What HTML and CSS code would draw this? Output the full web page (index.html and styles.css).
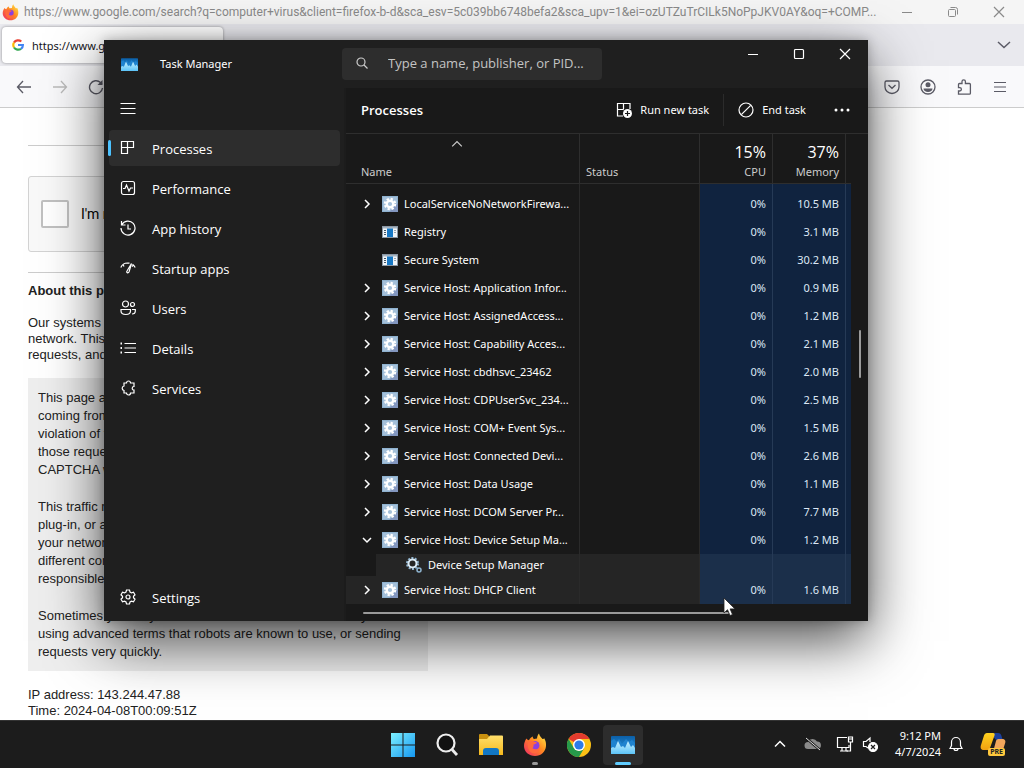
FILE: index.html
```html
<!DOCTYPE html>
<html lang="en">
<head>
	<meta charset="UTF-8">
	<title>Task Manager</title>
	<link rel="stylesheet" href="styles.css">
</head>
<body>
<!-- shared icons -->
<svg class="defs" width="0" height="0">
	<defs>
		<linearGradient id="tmSky" x1="0" y1="0" x2="0" y2="1"><stop offset="0" stop-color="#0b5fa8"/><stop offset="1" stop-color="#2ea0e6"/></linearGradient>
		<linearGradient id="tmWave" x1="0" y1="0" x2="0" y2="1"><stop offset="0" stop-color="#c9f1ff"/><stop offset="1" stop-color="#5cc3f7"/></linearGradient>
		<linearGradient id="win" x1="0" y1="0" x2="1" y2="1"><stop offset="0" stop-color="#7df0ff"/><stop offset="1" stop-color="#1597f0"/></linearGradient>
		<linearGradient id="fox" x1="1" y1="0" x2="0" y2="1"><stop offset="0" stop-color="#fff14a"/><stop offset=".45" stop-color="#ff8a1f"/><stop offset="1" stop-color="#f0246a"/></linearGradient>
		<linearGradient id="folder" x1="0" y1="0" x2="0" y2="1"><stop offset="0" stop-color="#ffdf6b"/><stop offset="1" stop-color="#f6b91c"/></linearGradient>
		<linearGradient id="cop" x1="0" y1="0" x2="0" y2="1"><stop offset="0" stop-color="#ffd21f"/><stop offset="1" stop-color="#f0a010"/></linearGradient>
	</defs>
	<symbol id="i-tm" viewBox="0 0 24 18">
		<rect width="24" height="18" rx="1" fill="url(#tmSky)"/>
		<path d="M0 5l3-2 3 3 2-3 3 5 4-5 3 3 3-2 3 3v10H0z" fill="#1f83cf"/>
		<path d="M0 12l2-1 2 1 3-7 3 6 2-1 2 2 3-7 3 6 2-2 2 3v6H0z" fill="url(#tmWave)"/>
	</symbol>
	<symbol id="i-fox" viewBox="0 0 24 24">
		<path d="M3.500 5.500c.6 1 1.400 1.600 2.500 1.800C7 5 8.500 4 10 3.500c-.4 1.200 0 2 1 2.600l3-.6c.2-2 .8-3.600 2-5 .5 2.500 2 3.600 3.500 5.500 1 .2 1.500-.2 1.700-.8 1.600 2.600 2 5 1.800 7.800-.5 6-5 10-11 10S1 18.700 1 13c0-3 1-5.500 2.500-7.500z" fill="url(#fox)"/>
		<circle cx="12" cy="12.500" r="4.500" fill="#8b3fe0"/>
		<path d="M5 9c2-1.500 4.500-1.500 6.500-.2l2.500.7c-.6 1.200-1.800 1.700-3.500 2 .2 1.500 0 2.700-1 3.800 2.500 2 6 1 7-1.500 1 4-2 6.700-5.500 6.500C6.500 20 4 15 5 9z" fill="#ff6a3c"/>
	</symbol>
	<symbol id="i-svc" viewBox="0 0 16 16">
		<rect width="16" height="16" fill="#8fb2cf"/>
		<rect x="1" y="1" width="14" height="14" fill="#a3bfd9"/>
		<path d="M16 7v9H7z" fill="#8296bf"/>
		<circle cx="8" cy="8" r="5.200" fill="none" stroke="#fff" stroke-width="2" stroke-dasharray="2.300 1.784"/>
		<circle cx="8" cy="8" r="3.300" fill="none" stroke="#fff" stroke-width="2.400"/>
	</symbol>
	<symbol id="i-app" viewBox="0 0 16 12">
		<rect x=".5" y=".5" width="15" height="11" fill="#f2f6fa" stroke="#8a97a5"/>
		<path d="M1 1h14v1.500H1z" fill="#a7b3bf"/>
		<rect x="5" y="2.500" width="6" height="8.500" fill="#1878c4"/>
		<path d="M2 4.500h2M2 6.500h2M2 8.500h2M12.500 4.500h1M12.500 6.500h1" stroke="#456"/>
	</symbol>
	<symbol id="i-right" viewBox="0 0 10 10"><path d="M3 1l4 4-4 4" fill="none" stroke="currentColor" stroke-width="1.500"/></symbol>
	<symbol id="i-down" viewBox="0 0 10 10"><path d="M1 3l4 4 4-4" fill="none" stroke="currentColor" stroke-width="1.500"/></symbol>
	<symbol id="i-up" viewBox="0 0 10 10"><path d="M1 7l4-4 4 4" fill="none" stroke="currentColor"/></symbol>
	<symbol id="i-min" viewBox="0 0 12 12"><path d="M1 6.500h10" stroke="currentColor"/></symbol>
	<symbol id="i-x" viewBox="0 0 12 12"><path d="M1 1l10 10M11 1L1 11" stroke="currentColor" stroke-width="1.200"/></symbol>
</svg>

<main class="browser">
	<header class="titlebar">
		<svg class="fox" width="17" height="17"><use href="#i-fox"/></svg>
		<span class="title">https://www.google.com/search?q=computer+virus&amp;client=firefox-b-d&amp;sca_esv=5c039bb6748befa2&amp;sca_upv=1&amp;ei=ozUTZuTrCILk5NoPpJKV0AY&amp;oq=+COMP...</span>
		<div class="caption">
			<button aria-label="Minimize"><svg width="12" height="12"><use href="#i-min"/></svg></button>
			<button aria-label="Restore"><svg width="12" height="12" fill="none" stroke="currentColor"><rect x="1.500" y="3.500" width="7" height="7" rx="1"/><path d="M3.500 1.500h5a2 2 0 0 1 2 2v5"/></svg></button>
			<button aria-label="Close"><svg width="12" height="12"><use href="#i-x"/></svg></button>
		</div>
	</header>
	<div class="tabs">
		<div class="tab">
			<svg width="12" height="12" viewBox="0 0 12 12" fill="none" stroke-width="2.200"><path d="M2 3.500A5 5 0 0 1 9.300 2.500" stroke="#ea4335"/><path d="M2 8.500a5 5 0 0 1 0-5" stroke="#fbbc05"/><path d="M2 8.500a5 5 0 0 0 7 1.300" stroke="#34a853"/><path d="M6 6h4.900c0 1.800-.7 3-1.900 3.800" stroke="#4285f4"/></svg>
			<span>https://www.google.com/search?q</span>
		</div>
		<button aria-label="List all tabs"><svg width="14" height="8" viewBox="0 0 14 8" fill="none" stroke="currentColor" stroke-width="1.500"><path d="M1 1l6 5.500L13 1"/></svg></button>
	</div>
	<nav class="toolbar">
		<button aria-label="Back"><svg width="16" height="16" viewBox="0 0 16 16" fill="none" stroke="currentColor" stroke-width="1.300"><path d="M15 8H1.500M7 2L1.500 8 7 14"/></svg></button>
		<button class="off" aria-label="Forward"><svg width="16" height="16" viewBox="0 0 16 16" fill="none" stroke="currentColor" stroke-width="1.300"><path d="M1 8h13.500M9 2l5.500 6L9 14"/></svg></button>
		<button aria-label="Reload"><svg width="16" height="16" viewBox="0 0 16 16" fill="none" stroke="currentColor" stroke-width="1.400"><path d="M14.500 9A6.500 6.500 0 1 1 12.500 3.500L14 5"/><path d="M14.500 1v5h-5z" fill="currentColor" stroke="none"/></svg></button>
		<div class="tools">
			<button aria-label="Save to Pocket"><svg width="16" height="16" viewBox="0 0 16 16" fill="none" stroke="currentColor" stroke-width="1.300"><path d="M2.500 2h11A1.500 1.500 0 0 1 15 3.500V8A7 6.500 0 0 1 1 8V3.500A1.500 1.500 0 0 1 2.500 2z"/><path d="M4.500 6L8 9.300 11.500 6"/></svg></button>
			<button aria-label="Account"><svg width="16" height="16" viewBox="0 0 16 16"><circle cx="8" cy="8" r="7" fill="none" stroke="currentColor" stroke-width="1.300"/><circle cx="8" cy="5.800" r="2.500" fill="currentColor"/><path d="M3.500 9.500h9c0 2-2 3.500-4.500 3.500S3.500 11.500 3.500 9.500z" fill="currentColor"/></svg></button>
			<button aria-label="Extensions"><svg width="16" height="16" viewBox="0 0 16 16" fill="none" stroke="currentColor" stroke-width="1.300"><path d="M2.500 15.200V12h1.200a1.700 1.700 0 0 0 0-3.400H2.500V5.500a1 1 0 0 1 1-1H6V2.600a1.700 1.700 0 0 1 3.400 0v1.900h4a1 1 0 0 1 1 1v8.700a1 1 0 0 1-1 1z"/></svg></button>
			<button aria-label="Menu"><svg width="14" height="12" viewBox="0 0 14 12" stroke="currentColor" stroke-width="1.200"><path d="M1 1.500h12M1 6h12M1 10.500h12"/></svg></button>
		</div>
	</nav>
	<article class="page">
		<hr>
		<div class="captcha">
			<input type="checkbox" id="robot">
			<label for="robot">I'm not a robot</label>
		</div>
		<hr>
		<h1>About this page</h1>
		<p>Our systems have detected unusual traffic from your computer<br>network. This page checks to see if it's really you sending the<br>requests, and not a robot. <a href="#why">Why did this happen?</a></p>
		<div class="why" id="why">
			<p>This page appears when Google automatically detects requests<br>coming from your computer network which appear to be in<br>violation of the <a href="#terms">Terms of Service</a>. The block will expire shortly after<br>those requests stop. In the meantime, solving the above<br>CAPTCHA will let you continue to use our services.</p>
			<p>This traffic may have been sent by malicious software, a browser<br>plug-in, or a script that sends automated requests. If you share<br>your network connection, ask your administrator for help — a<br>different computer using the same IP address may be<br>responsible. <a href="#more">Learn more</a></p>
			<p>Sometimes you may be asked to solve the CAPTCHA if you are<br>using advanced terms that robots are known to use, or sending<br>requests very quickly.</p>
		</div>
		<p class="ip">IP address: 143.244.47.88<br>Time: 2024-04-08T00:09:51Z</p>
	</article>
</main>

<section class="taskmgr" aria-label="Task Manager">
	<header class="tm-title">
		<svg width="17" height="13"><use href="#i-tm"/></svg>
		<span class="name">Task Manager</span>
		<label class="search">
			<svg width="12" height="12" viewBox="0 0 12 12" fill="none" stroke="currentColor" stroke-width="1.200"><circle cx="5" cy="5" r="4"/><path d="M8 8l3.500 3.500"/></svg>
			<input type="text" aria-label="Search" placeholder="Type a name, publisher, or PID...">
		</label>
		<div class="caption">
			<button aria-label="Minimize"><svg width="12" height="12"><use href="#i-min"/></svg></button>
			<button aria-label="Maximize"><svg width="12" height="12" fill="none" stroke="currentColor" stroke-width="1.200"><rect x="1.500" y="1.500" width="9" height="9" rx="1"/></svg></button>
			<button aria-label="Close"><svg width="12" height="12"><use href="#i-x"/></svg></button>
		</div>
	</header>
	<div class="tm-body">
		<nav class="side">
			<button class="burger" aria-label="Menu"><svg width="16" height="12" viewBox="0 0 16 12" stroke="currentColor"><path d="M.5 1.500h15M.5 6.500h15M.5 11.500h15"/></svg></button>
			<button class="item actived"><svg viewBox="0 0 16 16"><path d="M1.500 1.500h12v6h-6v6h-6zM7.500 1.500v6h-6"/></svg>Processes</button>
			<button class="item"><svg viewBox="0 0 16 16"><rect x="1.500" y="1.500" width="13" height="13" rx="2"/><path d="M3 8.500h2L6.500 5l2.500 6 1.500-3H13"/></svg>Performance</button>
			<button class="item"><svg viewBox="0 0 16 16"><path d="M1.500 1v4h4M1.800 4.800A7 7 0 1 1 1 8M8 4.500V9h3"/></svg>App history</button>
			<button class="item"><svg viewBox="0 0 16 16"><path d="M.8 7.500A7.500 7.500 0 0 1 7.500 3l2 .2M12.500 4.200c1.200.8 2 1.900 2.700 3.300M3 4.500l1 2M13.500 5l-1.500 1.500M7 11l4.500-7.500L9 12c-1 1.500-3 .5-2-1z"/></svg>Startup apps</button>
			<button class="item"><svg viewBox="0 0 16 16"><circle cx="5.500" cy="4" r="3"/><circle cx="12.500" cy="4.500" r="2"/><path d="M1 9.500h9.500v1.500c0 2.500-2 3.500-4.700 3.500S1 13.500 1 11zM12 9.500h3.300V11c0 2-1.500 3-3.300 3"/></svg>Users</button>
			<button class="item"><svg viewBox="0 0 16 16"><path d="M4.500 3.500H16M4.500 8H16M4.500 12.500H16"/><path d="M.5 3.500H2M.5 8H2M.5 12.500H2" stroke-width="2"/></svg>Details</button>
			<button class="item"><svg viewBox="0 0 16 16"><path d="M4 3h2.500a2 2 0 0 1 4 0H14v3.500a1.800 1.800 0 0 0 0 3.600V13h-3.500a2 2 0 0 1-4 0H4v-2.500a2.300 2.300 0 0 1 0-4.500z"/></svg>Services</button>
			<button class="item bottom"><svg viewBox="0 0 16 16"><path d="M6.500 1h3l.5 2 1.500.9 2-.7L15 5.800 13.500 7.200v1.600L15 10.200l-1.500 2.600-2-.7L10 13l-.5 2h-3L6 13l-1.500-.9-2 .7L1 10.200l1.500-1.400V7.200L1 5.800l1.500-2.600 2 .7L6 3z"/><circle cx="8" cy="8" r="2"/></svg>Settings</button>
		</nav>
		<div class="content">
			<div class="bar">
				<h2>Processes</h2>
				<button><svg width="16" height="16" viewBox="0 0 16 16"><path d="M7 14H1.500V1.500H14V7M7.500 1.500v6M1.500 7.500h6" fill="none" stroke="currentColor" stroke-width="1.200"/><circle cx="11.500" cy="11.500" r="4.500" fill="#fff"/><path d="M11.500 9v5M9 11.500h5" stroke="#191919" stroke-width="1.200"/></svg>Run new task</button>
				<button class="end"><svg width="16" height="16" viewBox="0 0 16 16" fill="none" stroke="currentColor" stroke-width="1.200"><circle cx="8" cy="8" r="7"/><path d="M3.300 12.700l9.400-9.400"/></svg>End task</button>
				<button class="more" aria-label="More"><svg width="16" height="4" viewBox="0 0 16 4" fill="currentColor"><circle cx="2" cy="2" r="1.500"/><circle cx="8" cy="2" r="1.500"/><circle cx="14" cy="2" r="1.500"/></svg></button>
			</div>
			<div class="grid">
				<table>
					<colgroup><col><col class="c-status"><col class="c-num"><col class="c-num"><col class="c-tail"></colgroup>
					<thead>
						<tr>
							<th><svg class="sort" width="12" height="12"><use href="#i-up"/></svg>Name</th>
							<th>Status</th>
							<th class="num"><b>15%</b>CPU</th>
							<th class="num"><b>37%</b>Memory</th>
							<th></th>
						</tr>
					</thead>
					<tbody id="rows"></tbody>
				</table>
				<div class="hscroll"></div>
				<div class="vscroll"></div>
			</div>
		</div>
	</div>
</section>

<footer class="taskbar">
	<div class="apps">
		<button aria-label="Start"><svg width="24" height="24" viewBox="0 0 24 24" fill="url(#win)"><path d="M0 0h11.500v11.500H0zM12.500 0H24v11.500H12.500zM0 12.500h11.500V24H0zM12.500 12.500H24V24H12.500z"/></svg></button>
		<button aria-label="Search"><svg width="24" height="24" viewBox="0 0 24 24" fill="none" stroke="#eee" stroke-width="2.200"><circle cx="11" cy="10" r="8.500" fill="#111"/><path d="M17 16.500l5 5.500" stroke-width="2.800"/></svg></button>
		<button aria-label="File Explorer"><svg width="26" height="24" viewBox="0 0 26 24"><path d="M1 2a1 1 0 0 1 1-1h7l2 2v3H1z" fill="#c8900f"/><path d="M1 6h8l3-3.500h12a1 1 0 0 1 1 1V22H1z" fill="url(#folder)"/><path d="M5 22v-4a3 3 0 0 1 3-3h10a3 3 0 0 1 3 3v4z" fill="#1277c4"/></svg></button>
		<button class="run" aria-label="Firefox"><svg width="24" height="24"><use href="#i-fox"/></svg></button>
		<button aria-label="Chrome"><svg width="24" height="24" viewBox="0 0 24 24"><circle cx="12" cy="12" r="12" fill="#fbc116"/><path d="M12 12L1.600 6A12 12 0 0 1 22.400 6H12z" fill="#e33b2e"/><path d="M1.600 6A12 12 0 0 0 12 24l5.200-9-5.200 3-5.200-3z" fill="#269a4a"/><circle cx="12" cy="12" r="6" fill="#fff"/><circle cx="12" cy="12" r="4.600" fill="#2d7be8"/></svg></button>
		<button class="open" aria-label="Task Manager"><svg width="24" height="18"><use href="#i-tm"/></svg></button>
	</div>
	<div class="tray">
		<button aria-label="Show hidden icons"><svg width="12" height="12" viewBox="0 0 12 12" fill="none" stroke="#fff" stroke-width="1.500"><path d="M1 8.500l5-5 5 5"/></svg></button>
		<svg width="18" height="14" viewBox="0 0 18 14"><path d="M4 12a3.500 3.500 0 0 1 0-7 5 5 0 0 1 9-.5A3.800 3.800 0 0 1 14 12z" fill="#8a8a8a"/><path d="M2 1l14 12" stroke="#1c1c1c" stroke-width="2.400"/><path d="M2 1l14 12" stroke="#ddd"/></svg>
		<div class="status">
			<svg width="18" height="18" viewBox="0 0 18 18" fill="none" stroke="#fff" stroke-width="1.200"><path d="M11 2.500H1.500v10H13V10M4 16h8M6 13v3M10 13v3"/><path d="M12.500 2h4v5h-4zM14.500 7v9h-4M12.500 4h4"/></svg>
			<svg width="16" height="16" viewBox="0 0 16 16" fill="none" stroke="#fff" stroke-width="1.200"><path d="M6 12L4 10.500H1.500v-5H4L8 2v4"/><circle cx="11" cy="11" r="4.500" fill="#fff"/><path d="M9 9l4 4M13 9l-4 4" stroke="#1c1c1c"/></svg>
		</div>
		<time>9:12 PM<br>4/7/2024</time>
		<svg width="14" height="16" viewBox="0 0 14 16" fill="none" stroke="#fff" stroke-width="1.200"><path d="M1 12.500l1.500-3V6a4.500 4.500 0 0 1 9 0v3.500l1.500 3zM5 12.500a2 2 0 0 0 4 0"/></svg>
		<div class="copilot">
			<svg width="26" height="24" viewBox="0 0 26 24"><path d="M10 1h8c2 0 3 1 3.500 3L23 9h-6z" fill="#1b3f9c"/><path d="M7 1h6c1.500 0 2 1 1.500 2.500L10 16c-.5 1.500-1.500 2-3 2H4c-3 0-4-2-3-5L4 3.500C4.500 2 5.500 1 7 1z" fill="url(#cop)"/><path d="M19 7h3c3 0 4 2 3 4.500l-2.500 8c-.5 1.500-1.500 2.500-3 2.500h-7L16 9c.5-1.500 1.500-2 3-2z" fill="#f2a65c"/></svg>
			<span>PRE</span>
		</div>
	</div>
</footer>

<svg class="cursor" width="13" height="20" viewBox="0 0 13 20"><path d="M1 1v15l3.500-3.300L7 18.500l2.500-1-2.400-5.600H12z" fill="#fff" stroke="#222" stroke-width=".8"/></svg>
<script src="script.js"></script>
</body>
</html>
```

FILE: styles.css
```css
*{box-sizing:border-box;}
body{margin:0;height:100vh;display:flex;flex-direction:column;overflow:hidden;font-family:"Noto Sans","Open Sans",sans-serif;font-size:11px;background:#fff;}
button{border:0;padding:0;background:none;color:inherit;font:inherit;display:flex;align-items:center;justify-content:center;}
svg{flex:none;display:block;}
.defs{position:absolute;}

/* browser behind */
.browser{flex:1;min-height:0;overflow:hidden;color:#222;}
.titlebar{height:24px;display:flex;align-items:center;background:#f5f5f5;color:#8a8a8a;padding-left:2px;gap:5px;}
.titlebar .title{flex:1;min-width:0;white-space:nowrap;line-height:24px;font-family:Roboto,sans-serif;font-size:12px;}
.caption{display:flex;}
.caption button{width:46px;height:20px;}
.titlebar .caption{margin-right:2px;}
.tabs{height:42px;display:flex;align-items:center;justify-content:space-between;background:#e9e9ee;padding:0 12px 0 2px;}
.tab{width:221px;height:36px;display:flex;align-items:center;gap:8px;padding:0 10px;background:#fff;border-radius:4px;box-shadow:0 0 3px rgba(0,0,0,.4);color:#15141a;white-space:nowrap;}
.tabs button{width:16px;color:#5b5b66;}
.toolbar{height:42px;display:flex;align-items:center;gap:20px;padding:0 16px;background:#f9f9fb;border-bottom:1px solid #ccc;color:#5b5b66;}
.toolbar .off{color:#bbb;}
.tools{margin-left:auto;display:flex;gap:20px;}
.toolbar button{width:16px;}
.page{width:400px;margin-left:28px;font-family:"Liberation Sans",Arial,sans-serif;font-size:13px;line-height:16px;}
.page hr{border:0;border-top:1px solid #ccc;margin:0;}
.page hr:first-child{margin:37px 0 30px;}
.captcha{width:304px;height:76px;display:flex;align-items:center;gap:12px;padding:0 12px;margin-bottom:20px;background:#f9f9f9;border:1px solid #d3d3d3;border-radius:3px;}
.captcha input{appearance:none;width:28px;height:28px;margin:0;background:#fff;border:2px solid #c1c1c1;border-radius:2px;}
.captcha label{color:#000;font-family:Roboto,sans-serif;font-size:14px;}
.page h1{margin:10px 0 16px;font-size:13px;line-height:16px;}
.page p{margin:0;white-space:nowrap;}
.page a{color:#15c;text-decoration:none;}
.why{margin:15px 0 16px;padding:11px 10px 10px;background:#eee;line-height:18px;}
.why p + p{margin-top:19px;}

/* task manager window */
.taskmgr{position:absolute;left:104px;top:40px;width:764px;height:581px;display:flex;flex-direction:column;background:#1f1f1f;color:#fff;box-shadow:0 0 10px rgba(0,0,0,.25),0 20px 54px rgba(0,0,0,.7);}
.tm-title{height:48px;display:flex;align-items:center;padding-left:17px;}
.tm-title .name{width:204px;padding:0 0 2px 22px;}
.search{width:260px;height:32px;margin-right:auto;display:flex;align-items:center;gap:20px;padding:0 14px 2px;background:#2d2d2d;border-radius:4px;color:#ccc;}
.search input{flex:1;min-width:0;border:0;outline:0;padding:0;background:none;color:inherit;font-family:"Open Sans",sans-serif;font-size:13px;}
.search input::placeholder{color:#c4c4c4;}
.tm-title .caption{align-self:flex-start;}
.tm-title .caption button{height:28px;}
.tm-body{flex:1;min-height:0;display:flex;}
.side{width:240px;display:flex;flex-direction:column;padding:0 4px 6px 5px;}
.burger{width:38px;height:40px;}
.item{position:relative;height:36px;margin:2px 0;padding:1px 0 0 11px;justify-content:flex-start;gap:16px;border-radius:4px;font-family:"Open Sans",sans-serif;font-size:13px;}
.item svg{width:16px;height:16px;margin-bottom:2px;fill:none;stroke:currentColor;stroke-width:1.2;}
.item.actived{background:#2d2d2d;}
.item.actived:before{content:'';position:absolute;left:-1px;top:10px;width:3px;height:16px;border-radius:2px;background:#4cc2ff;}
.item.bottom{margin-top:auto;margin-bottom:0;}
.content{flex:1;min-width:0;display:flex;flex-direction:column;background:#191919;border-left:2px solid #1c1c1c;}
.bar{height:46px;display:flex;align-items:center;padding:0 18px 2px 15px;border-bottom:1px solid #2e2e2e;}
.bar h2{flex:1;margin:0;font-family:"Open Sans",sans-serif;font-size:13px;font-weight:600;}
.bar button{gap:8px;height:32px;}
.bar .end{margin-left:14px;padding-left:14px;border-left:1px solid #2b2b2b;}
.bar .more{margin-left:28px;}

.grid{position:relative;flex:1;padding-right:17px;}
table{width:100%;table-layout:fixed;border-collapse:separate;border-spacing:0;}
.c-status{width:120px;}
.c-num{width:73px;}
.c-tail{width:5px;}
th{position:relative;height:50px;padding:0 6px 3px;vertical-align:bottom;text-align:left;font-weight:400;line-height:16px;color:#ccc;border-right:1px solid #2e2e2e;border-bottom:1px solid #2e2e2e;}
th:first-child{padding-left:15px;}
th:last-child,td:last-child{padding:0;border-right:0;}
th b{display:block;font-family:"Open Sans",sans-serif;font-size:16px;line-height:24px;font-weight:400;color:#fff;}
.sort{position:absolute;left:50%;top:4px;margin-left:-12px;}
th.num,td.num{padding-right:6px;text-align:right;}
td{height:28px;padding:0 0 1px;border-right:1px solid #2a2a2a;white-space:nowrap;line-height:16px;}
.gap td{height:6px;}
.heat{background:#10233f;border-right-color:#263a56;color:#dde8f5;}
.proc{display:flex;align-items:center;padding-left:16px;}
.proc .chev{width:10px;margin-right:10px;}
.proc .ico{width:16px;margin-right:6px;}
.child td{height:22px;}
.child td:first-child{background:linear-gradient(#252525,#252525) 30px 0 no-repeat;}
.child .proc{padding-left:60px;}
.hot td{background-color:#252525;}
.child td:first-child{background-color:#191919;}
.hot .heat{background-color:#1b2f4a;}
.hscroll{height:2px;width:366px;margin:8px 0 0 17px;border-radius:1px;background:#9a9a9a;}
.vscroll{position:absolute;right:7px;top:196px;width:2px;height:48px;border-radius:1px;background:#9a9a9a;}

/* taskbar */
.taskbar{position:relative;height:48px;display:flex;align-items:center;justify-content:center;background:#1c1c1c;border-top:1px solid #333;color:#fff;}
.apps{display:flex;gap:4px;padding-left:2px;}
.apps button{position:relative;width:40px;height:40px;border-radius:4px;}
.apps .open{background:#2d2d2d;}
.apps .run:after,.apps .open:after{content:'';position:absolute;bottom:0;left:17px;width:6px;height:3px;border-radius:2px;background:#999;}
.apps .open:after{left:12px;width:16px;background:#60cdff;}
.tray{position:absolute;right:18px;top:0;height:45px;display:flex;align-items:center;gap:8px;}
.tray button{margin-right:10px;}
.status{display:flex;align-items:center;gap:8px;margin:0 9px 0 6px;}
time{text-align:right;line-height:16px;}
.copilot{position:relative;margin-left:9px;}
.copilot span{position:absolute;right:1px;bottom:0;padding:0 2px;border-radius:2px;background:#ffc83d;color:#222;font-size:7px;font-weight:700;line-height:8px;}
.cursor{position:absolute;left:723px;top:597px;}
```

FILE: script.js
```js
var rows = [
	['LocalServiceNoNetworkFirewa...', '10.5 MB', 'svc'],
	['Registry', '3.1 MB', 'app'],
	['Secure System', '30.2 MB', 'app'],
	['Service Host: Application Infor...', '0.9 MB', 'svc'],
	['Service Host: AssignedAccess...', '1.2 MB', 'svc'],
	['Service Host: Capability Acces...', '2.1 MB', 'svc'],
	['Service Host: cbdhsvc_23462', '2.0 MB', 'svc'],
	['Service Host: CDPUserSvc_234...', '2.5 MB', 'svc'],
	['Service Host: COM+ Event Sys...', '1.5 MB', 'svc'],
	['Service Host: Connected Devi...', '2.6 MB', 'svc'],
	['Service Host: Data Usage', '1.1 MB', 'svc'],
	['Service Host: DCOM Server Pr...', '7.7 MB', 'svc'],
	['Service Host: Device Setup Ma...', '1.2 MB', 'svc', 'down'],
	['Device Setup Manager', '', 'child'],
	['Service Host: DHCP Client', '1.6 MB', 'svc', 'right', 'hot']
];
var gears = '<svg class="ico" width="16" height="16" viewBox="0 0 16 16" fill="none"><circle cx="6.500" cy="6.500" r="5.500" stroke="#8fb4d0" stroke-width="2" stroke-dasharray="2 1.450"/><circle cx="6.500" cy="6.500" r="4" stroke="#dcebf5" stroke-width="2"/><circle cx="13" cy="13" r="2" stroke="#8fb4d0" stroke-width="1.500"/></svg>';

function cells(cpu, mem){
	return '<td></td><td class="heat num">' + cpu + '</td><td class="heat num">' + mem + '</td><td class="heat"></td></tr>';
}

var html = '<tr class="gap"><td></td>' + cells('', '');
for (var i = 0; i < rows.length; i++) {
	var r = rows[i];
	if (r[2] == 'child') {
		html += '<tr class="child hot"><td><div class="proc">' + gears + r[0] + '</div></td>' + cells('', '');
		continue;
	}
	var chev = r[2] == 'svc' ? '<use href="#i-' + (r[3] || 'right') + '"/>' : '';
	var h = r[2] == 'svc' ? 16 : 12;
	html += '<tr class="' + (r[4] || '') + '"><td><div class="proc"><svg class="chev" width="10" height="10">' + chev + '</svg>'
		+ '<svg class="ico" width="16" height="' + h + '"><use href="#i-' + r[2] + '"/></svg>' + r[0] + '</div></td>' + cells('0%', r[1]);
}
document.getElementById('rows').innerHTML = html;
```
